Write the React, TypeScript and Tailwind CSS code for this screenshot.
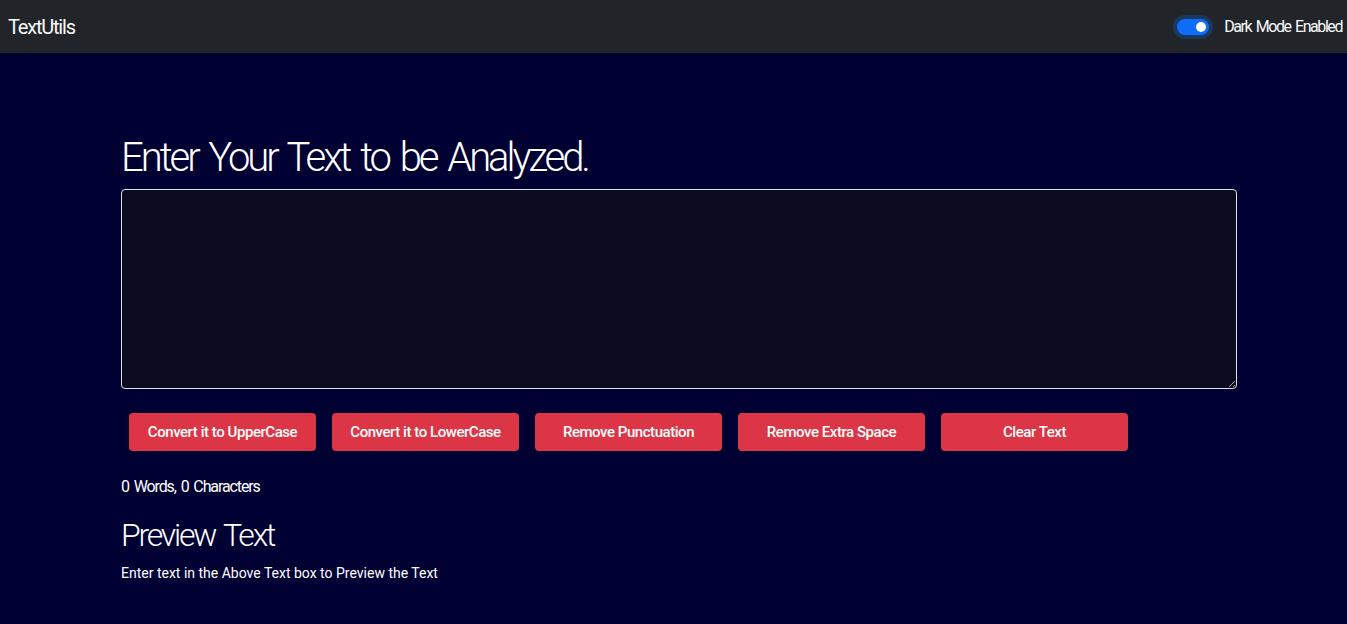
import { useState } from "react";

const font = { fontFamily: 'Roboto, "Liberation Sans", sans-serif' };

const actions = [
  "Convert it to UpperCase",
  "Convert it to LowerCase",
  "Remove Punctuation",
  "Remove Extra Space",
  "Clear Text",
];

function Navbar() {
  return (
    <nav className="flex h-[53px] items-center justify-between bg-[#212529] pl-2 pr-[5px] text-[#f8f9fa]">
      <span className="text-[20px] tracking-[-0.06em]">TextUtils</span>
      <label className="flex items-center gap-[15px]">
        <span className="relative flex h-4 w-8 items-center justify-end rounded-full bg-[#0d6efd] px-[3px] shadow-[0_0_0_4px_rgba(13,110,253,0.25)]">
          <span className="h-[10px] w-[10px] rounded-full bg-white" />
        </span>
        <span className="text-[16px] tracking-[-0.09em] [word-spacing:2px]">Dark Mode Enabled</span>
      </label>
    </nav>
  );
}

export default function App() {
  const [text, setText] = useState("");
  const words = text.split(/\s+/).filter((w) => w.length > 0).length;

  return (
    <div className="min-h-[624px] bg-[#000033] text-white" style={font}>
      <Navbar />
      <main className="ml-[121px] w-[1116px] pt-[81px]">
        <h1 className="mb-[7px] text-[40px] font-light leading-[48px] tracking-[-0.076em] [word-spacing:4px]">
          Enter Your Text to be Analyzed.
        </h1>
        <textarea
          className="block h-[200px] w-full rounded border border-[#dee2e6] bg-[#0b0c1f] px-3 py-[6px] text-white outline-none"
          value={text}
          onChange={(e) => setText(e.target.value)}
        />
        <div className="mt-6 flex gap-4 px-2">
          {actions.map((label) => (
            <button
              key={label}
              className="h-[38px] w-[187px] whitespace-nowrap rounded bg-[#dc3545] text-[15px] font-medium tracking-[-0.03em] text-white"
            >
              {label}
            </button>
          ))}
        </div>
        <p className="mt-[24px] text-[16px] leading-6 tracking-[-0.07em] [word-spacing:2px]">
          {words} Words, {text.length} Characters
        </p>
        <h2 className="mt-[17px] text-[32px] font-light leading-[38px] tracking-[-0.07em] [word-spacing:3px]">
          Preview Text
        </h2>
        <p className="mt-[9px] text-[14px] leading-5">
          {text.length > 0 ? text : "Enter text in the Above Text box to Preview the Text"}
        </p>
      </main>
    </div>
  );
}
